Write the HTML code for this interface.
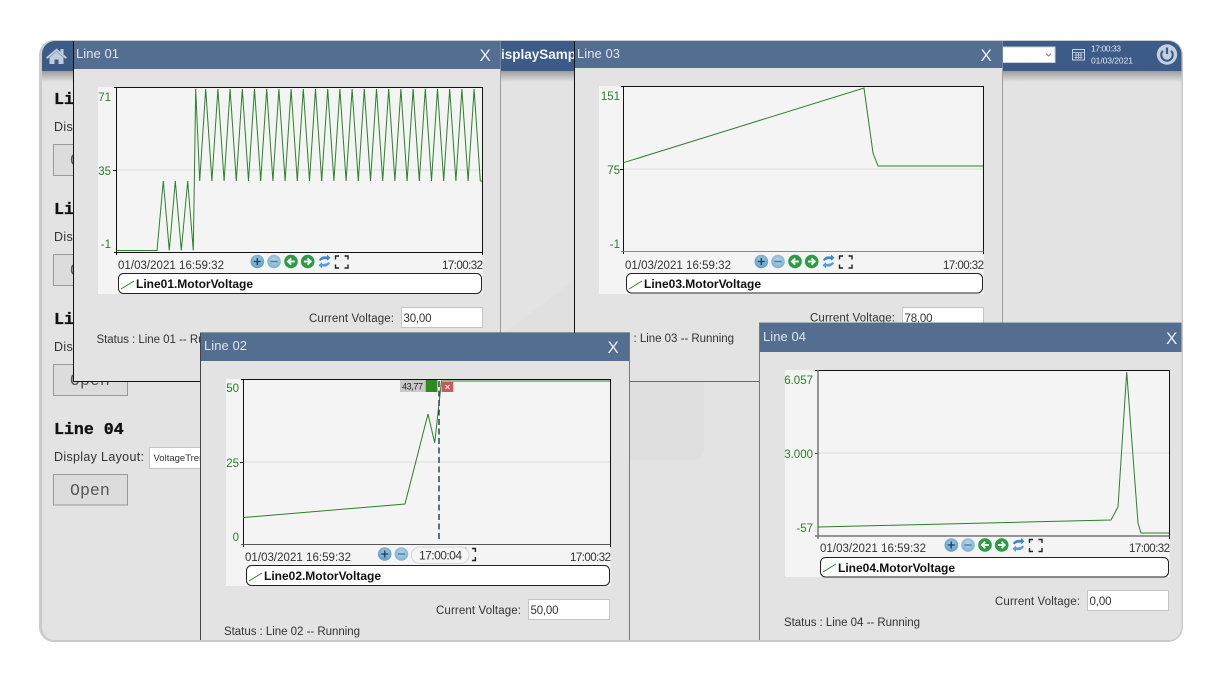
<!DOCTYPE html>
<html lang="en">
<head>
<meta charset="utf-8">
<title>Line Display</title>
<style>
html,body{margin:0;padding:0;background:#fff;width:1222px;height:681px;overflow:hidden}
svg{display:block;position:absolute;left:0;top:0;font-family:"Liberation Sans",sans-serif;filter:blur(.3px)}
.t{font-size:11.5px;fill:#333}
.ax{font-size:11.5px;fill:#2f7a2f}
.leg{font-size:12px;font-weight:bold;fill:#111}
.ti{font-size:13px;fill:#dfe6ee}
.x{font-size:17px;fill:#e8edf3}
.mono{font-family:"Liberation Mono",monospace}
.h{font-size:16.6px;font-weight:bold;fill:#111;stroke:#111;stroke-width:.35px}
.op{font-size:16.6px;fill:#555}
.tr{fill:none;stroke:#2c7f2c;stroke-width:1;stroke-linejoin:miter}
</style>
</head>
<body>
<svg width="1222" height="681" viewBox="0 0 1222 681" xmlns="http://www.w3.org/2000/svg">
<defs>
<clipPath id="outer"><rect x="42" y="41" width="1139.500" height="599" rx="13"/></clipPath>
<linearGradient id="sh" x1="0" y1="0" x2="0" y2="1"><stop offset="0" stop-color="#9c9c9c"/><stop offset="1" stop-color="#e3e3e3"/></linearGradient>
<radialGradient id="bl" cx=".5" cy=".4" r=".6"><stop offset="0" stop-color="#a9cde3"/><stop offset="1" stop-color="#5c9bc4"/></radialGradient>
<radialGradient id="bl2" cx=".5" cy=".4" r=".6"><stop offset="0" stop-color="#b5d4e6"/><stop offset="1" stop-color="#7db0d0"/></radialGradient>
<g id="tb">
<circle cx="257.300" cy="261.500" r="6.800" fill="url(#bl)"/>
<path d="M253.800 261.500h7M257.300 258v7" stroke="#24486a" stroke-width="1.600" fill="none"/>
<circle cx="274" cy="261.500" r="6.800" fill="url(#bl2)"/>
<path d="M270.500 261.500h7" stroke="#4f7f9f" stroke-width="1.600" fill="none"/>
<circle cx="291" cy="261.500" r="6.800" fill="#2d9a46"/>
<path d="M294.800 261.500h-6M291.200 258.300l-3.200 3.200 3.200 3.200" stroke="#eef6ee" stroke-width="2" fill="none"/>
<circle cx="307.700" cy="261.500" r="6.800" fill="#2d9a46"/>
<path d="M303.900 261.500h6M307.500 258.300l3.200 3.200-3.200 3.200" stroke="#eef6ee" stroke-width="2" fill="none"/>
<path d="M319 260c1.500-3.500 5-4 8-3.500v-2l3.500 3.200-3.500 3.200v-1.700c-2.500-.2-5 0-6.500 1.800z" fill="#3f86cc"/>
<path d="M330 263c-1.500 3.500-5 4-8 3.500v2l-3.500-3.200 3.500-3.200v1.700c2.500.2 5 0 6.500-1.800z" fill="#5a9bd8"/>
<path d="M335.500 259.500v-3.500h3.500M344.500 256h3.500v3.500M348 264.500v3.500h-3.500M339 268h-3.500v-3.500" stroke="#222" stroke-width="1.400" fill="none"/>
</g>
</defs>

<rect x="39" y="40" width="1144" height="602" rx="15" fill="#cbcbcb"/>
<g clip-path="url(#outer)">
<rect x="41" y="41" width="1141" height="600" fill="#e3e3e3"/>

<!-- watermark -->
<path d="M500 335L575 280V381H500z" fill="#e0e0e0"/>
<path d="M500 381H704V448q0 12-12 12H500z" fill="#dfdfdf"/>

<!-- header -->
<rect x="41" y="71" width="1141" height="11" fill="url(#sh)"/>
<rect x="41" y="41" width="1141" height="30" fill="#3c5b86"/>
<path d="M46 57.500L56.500 48.500l4 3.400v-2.900h3v5.400l3.500 3-1.300 1.500-9.200-7.800-9.200 7.800z" fill="#bfccdc"/>
<path d="M49.500 57.500l7-6 7 6v6.500h-5v-4.500h-4v4.500h-5z" fill="#bfccdc"/>
<text x="501" y="59" font-size="13.500" font-weight="bold" fill="#f2f5f8">isplaySampl</text>
<rect x="1000" y="47" width="55" height="15.500" fill="#fff" stroke="#c8d0da"/>
<path d="M1046 53.500l2.500 2.500 2.500-2.500" fill="none" stroke="#888" stroke-width="1.100"/>
<g fill="none" stroke="#c9d4e1">
<rect x="1072.500" y="49.500" width="12" height="10.500"/>
<path d="M1072.500 52.500h12M1074.500 55h8M1074.500 57.500h8M1076 53v6M1078.500 53v6M1081 53v6" stroke-width=".8"/>
</g>
<text x="1091" y="51.500" font-size="8.500" fill="#e2e8ef" textLength="30">17:00:33</text>
<text x="1091" y="63.500" font-size="8.500" fill="#e2e8ef" textLength="42">01/03/2021</text>
<circle cx="1167" cy="54.500" r="10.200" fill="#c3d0de"/>
<path d="M1162.900 50.800a5.800 5.800 0 1 0 8.200 0" fill="none" stroke="#3c5b86" stroke-width="2"/>
<path d="M1167 47.500v6.500" stroke="#3c5b86" stroke-width="2.200"/>

<!-- base content -->
<g class="mono">
<text class="h" x="54" y="104">Line 01</text>
<text class="h" x="54" y="214">Line 02</text>
<text class="h" x="54" y="324">Line 03</text>
<text class="h" x="54" y="434">Line 04</text>
</g>
<text x="54" y="131" font-size="12.500" fill="#333" textLength="90">Display Layout:</text>
<text x="54" y="241" font-size="12.500" fill="#333" textLength="90">Display Layout:</text>
<text x="54" y="351" font-size="12.500" fill="#333" textLength="90">Display Layout:</text>
<text x="54" y="461" font-size="12.500" fill="#333" textLength="90">Display Layout:</text>
<rect x="53.500" y="144.500" width="74" height="31" fill="#dcdcdc" stroke="#9a9a9a"/>
<rect x="53.500" y="254.500" width="74" height="31" fill="#dcdcdc" stroke="#9a9a9a"/>
<rect x="53.500" y="364.500" width="74" height="31" fill="#dcdcdc" stroke="#9a9a9a"/>
<rect x="53.500" y="474.500" width="74" height="30.500" fill="#dcdcdc" stroke="#9a9a9a"/>
<text class="op mono" x="70" y="165">Open</text>
<text class="op mono" x="70" y="275">Open</text>
<text class="op mono" x="70" y="385">Open</text>
<text class="op mono" x="70" y="495">Open</text>
<rect x="149.500" y="447.500" width="80" height="21" fill="#fff" stroke="#c4c4c4"/>
<text x="153.500" y="461" font-size="9.500" fill="#333">VoltageTrend</text>

<!-- Line 01 -->
<rect x="73.500" y="41" width="427" height="340.500" fill="#e3e3e3" stroke="#111"/>
<path d="M500.500 41V381" stroke="#9d9d9d"/>
<rect x="74" y="41" width="426.500" height="28" fill="#546e91"/>
<text class="ti" x="76" y="58" textLength="43">Line 01</text>
<text class="x" x="479.500" y="61">X</text>
<rect x="98" y="87" width="384.500" height="207" fill="#f4f4f4"/>
<path d="M116 170H482" stroke="#dddddd"/>
<path d="M114 87.500H482.500V255M116.500 87V255M114 252.500H482.500M113 170.500h3" fill="none" stroke="#111"/>
<path class="tr" d="M116.500 250.500H157L163.300 181L169.300 250.500L175.300 181L181.300 250.500L187.700 181L193.300 250.500L195.700 89L199.700 181L205.700 89L211.900 181L217.900 89L224.100 181L230.100 89L236.300 181L242.300 89L248.500 181L254.500 89L260.700 181L266.700 89L272.900 181L278.900 89L285.100 181L291.100 89L297.300 181L303.300 89L309.500 181L315.500 89L321.700 181L327.700 89L333.900 181L339.900 89L346.100 181L352.100 89L358.300 181L364.300 89L370.500 181L376.500 89L382.700 181L388.700 89L394.900 181L400.900 89L407.100 181L413.100 89L419.300 181L425.300 89L431.500 181L437.500 89L443.700 181L449.700 89L455.900 181L461.900 89L468.100 181L474.100 89L480.300 181H482"/>
<text class="ax" x="111" y="101" text-anchor="end">71</text>
<text class="ax" x="111" y="175" text-anchor="end">35</text>
<text class="ax" x="111" y="248" text-anchor="end">-1</text>
<text class="t" x="118" y="269" textLength="106">01/03/2021 16:59:32</text>
<text class="t" x="442" y="269" textLength="41">17:00:32</text>
<use href="#tb"/>
<rect x="118.500" y="273.500" width="363" height="20" rx="5" fill="#fff" stroke="#222"/>
<path d="M121 289L134 281" stroke="#2c7f2c" fill="none"/>
<text class="leg" x="136" y="288" textLength="117">Line01.MotorVoltage</text>
<text class="t" x="309" y="322" textLength="85">Current Voltage:</text>
<rect x="401.500" y="307.500" width="81" height="20" fill="#fff" stroke="#c4c4c4"/>
<text class="t" x="403.500" y="322" textLength="28">30,00</text>
<text class="t" x="96.500" y="343" textLength="136">Status : Line 01 -- Running</text>

<!-- Line 03 -->
<rect x="574.500" y="41" width="428" height="340.500" fill="#e3e3e3" stroke="#111"/>
<path d="M1002.500 41V381" stroke="#9d9d9d"/>
<rect x="575" y="41" width="427.500" height="27" fill="#546e91"/>
<text class="ti" x="577" y="58" textLength="43">Line 03</text>
<text class="x" x="980.500" y="61">X</text>
<rect x="599" y="86" width="384.500" height="208" fill="#f4f4f4"/>
<path d="M623 169H983" stroke="#dddddd"/>
<path d="M621 86.500H983.500V254M623.500 86V254M620 169.500h3" fill="none" stroke="#111"/>
<path d="M621 251.500H983.500" stroke="#888"/>
<path class="tr" d="M623.500 162.700L864 88L873 153L878 166H983"/>
<text class="ax" x="620" y="100" text-anchor="end">151</text>
<text class="ax" x="620" y="174" text-anchor="end">75</text>
<text class="ax" x="620" y="248" text-anchor="end">-1</text>
<text class="t" x="625" y="269" textLength="106">01/03/2021 16:59:32</text>
<text class="t" x="943" y="269" textLength="41">17:00:32</text>
<use href="#tb" transform="translate(504 0)"/>
<rect x="626.500" y="273.500" width="356" height="19.500" rx="5" fill="#fff" stroke="#222"/>
<path d="M629 289L642 281" stroke="#2c7f2c" fill="none"/>
<text class="leg" x="644" y="288" textLength="117">Line03.MotorVoltage</text>
<text class="t" x="810" y="321.500" textLength="85">Current Voltage:</text>
<rect x="902.500" y="307.500" width="81" height="20" fill="#fff" stroke="#c4c4c4"/>
<text class="t" x="904.500" y="322" textLength="28">78,00</text>
<text class="t" x="598" y="342" textLength="136">Status : Line 03 -- Running</text>

<!-- Line 02 -->
<path d="M629 381.500H760" stroke="#6a6a6a"/>
<rect x="200.500" y="333" width="429" height="320" fill="#e3e3e3" stroke="#444"/>
<path d="M629.500 333V641" stroke="#777"/>
<rect x="201" y="333" width="428" height="28" fill="#546e91"/>
<text class="ti" x="204" y="350" textLength="43">Line 02</text>
<text class="x" x="607.500" y="353">X</text>
<rect x="226" y="379" width="384.500" height="207" fill="#f4f4f4"/>
<path d="M243 462H610" stroke="#dddddd"/>
<path d="M241 379.500H610.500V547M243.500 379V547M240 462.500h3" fill="none" stroke="#111"/>
<path d="M241 544.500H610.500" stroke="#555"/>
<path class="tr" d="M243.500 517.500L405 504L428 414L434.700 442.700L441.500 381H610"/>
<path d="M439 381V541" stroke="#2f4350" stroke-width="1.500" stroke-dasharray="6 3.500" fill="none"/>
<rect x="400" y="380" width="25.700" height="12" fill="#c9c9c9"/>
<rect x="425.700" y="380" width="11.700" height="12" fill="#2f8a1f"/>
<text x="402" y="389.500" font-size="9" fill="#222" textLength="21">43,77</text>
<rect x="441.700" y="382" width="11.600" height="10" fill="#c95858"/>
<path d="M445.500 385l4 4M449.500 385l-4 4" stroke="#f6e8e8" stroke-width="1.100"/>
<text class="ax" x="239" y="392" text-anchor="end">50</text>
<text class="ax" x="239" y="467" text-anchor="end">25</text>
<text class="ax" x="239" y="541" text-anchor="end">0</text>
<text class="t" x="245" y="561" textLength="106">01/03/2021 16:59:32</text>
<text class="t" x="570" y="561" textLength="41">17:00:32</text>
<use href="#tb" transform="translate(127.400 292.500)"/>
<rect x="411.500" y="547" width="57.500" height="16.500" rx="8.200" fill="#f5f5f5" stroke="#d8d8d8"/>
<text x="419" y="559.500" font-size="12" fill="#333" textLength="43">17:00:04</text>
<rect x="246.500" y="565.500" width="363" height="20" rx="5" fill="#fff" stroke="#222"/>
<path d="M249 581L262 573" stroke="#2c7f2c" fill="none"/>
<text class="leg" x="264" y="580" textLength="117">Line02.MotorVoltage</text>
<text class="t" x="436" y="614" textLength="85">Current Voltage:</text>
<rect x="528.500" y="599.500" width="81" height="20" fill="#fff" stroke="#c4c4c4"/>
<text class="t" x="530.500" y="614" textLength="28">50,00</text>
<text class="t" x="224" y="635" textLength="136">Status : Line 02 -- Running</text>

<!-- Line 04 -->
<rect x="759.500" y="323" width="430" height="330" fill="#e3e3e3" stroke="#777"/>
<rect x="760" y="323" width="422" height="29" fill="#546e91"/>
<text class="ti" x="763" y="341" textLength="43">Line 04</text>
<text class="x" x="1166" y="344">X</text>
<rect x="785" y="370" width="384.500" height="207" fill="#f4f4f4"/>
<path d="M818 453H1169" stroke="#dddddd"/>
<path d="M815 370.500H1169.500V539" fill="none" stroke="#111"/>
<path d="M818 370V539M815 536H1169.500" fill="none" stroke="#777" stroke-width="1.500"/>
<path d="M815 453.500h3" stroke="#555"/>
<path class="tr" d="M818 527L1111 520L1118 507L1126.700 372L1138 523L1141 533H1169"/>
<text class="ax" x="813" y="384" text-anchor="end">6.057</text>
<text class="ax" x="813" y="458" text-anchor="end">3.000</text>
<text class="ax" x="813" y="532" text-anchor="end">-57</text>
<text class="t" x="820" y="552" textLength="106">01/03/2021 16:59:32</text>
<text class="t" x="1129" y="552" textLength="41">17:00:32</text>
<use href="#tb" transform="translate(694 283.500)"/>
<rect x="820.500" y="557.500" width="348" height="19.500" rx="5" fill="#fff" stroke="#222"/>
<path d="M823 572L836 564" stroke="#2c7f2c" fill="none"/>
<text class="leg" x="838" y="572" textLength="117">Line04.MotorVoltage</text>
<text class="t" x="995" y="605" textLength="85">Current Voltage:</text>
<rect x="1087.500" y="590.500" width="81" height="20" fill="#fff" stroke="#c4c4c4"/>
<text class="t" x="1089.500" y="605" textLength="22">0,00</text>
<text class="t" x="784" y="626" textLength="136">Status : Line 04 -- Running</text>
</g>
</svg>
</body>
</html>
